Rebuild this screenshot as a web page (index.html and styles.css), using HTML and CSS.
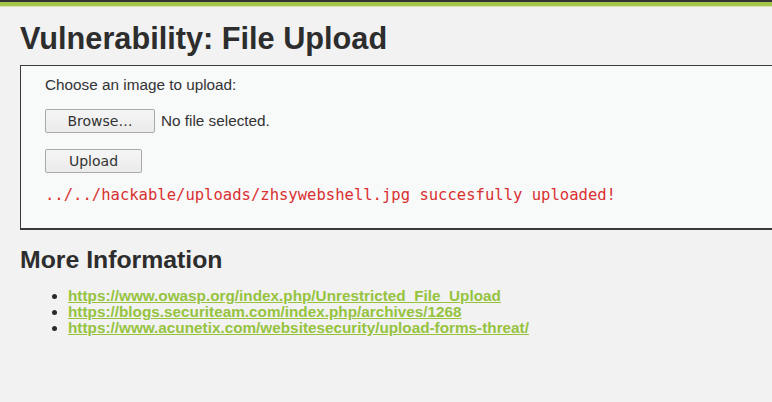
FILE: index.html
```html
<!DOCTYPE html>
<html>
<head>
<meta charset="utf-8">
<link rel="stylesheet" href="styles.css">
</head>
<body>
<div class="topbar"></div>
<div class="main">
  <h1 class="title">Vulnerability: File Upload</h1>
  <div class="code-area">
    <form class="upload-form">
      <p class="label">Choose an image to upload:</p>
      <div class="file-row">
        <span class="btn btn-browse">Browse…</span>
        <span class="file-status">No file selected.</span>
      </div>
      <div class="upload-row">
        <span class="btn btn-upload">Upload</span>
      </div>
    </form>
    <pre class="message">../../hackable/uploads/zhsywebshell.jpg succesfully uploaded!</pre>
  </div>
  <h2 class="subtitle">More Information</h2>
  <ul class="links">
    <li><a href="#">https://www.owasp.org/index.php/Unrestricted_File_Upload</a></li>
    <li><a href="#">https://blogs.securiteam.com/index.php/archives/1268</a></li>
    <li><a href="#">https://www.acunetix.com/websitesecurity/upload-forms-threat/</a></li>
  </ul>
</div>
</body>
</html>
```
FILE: styles.css
```css
html, body {
  margin: 0;
  padding: 0;
}
body {
  background: #f2f2f2;
  font-family: "Liberation Sans", Arial, sans-serif;
  color: #2b2b2b;
  overflow: hidden;
}
.topbar {
  height: 4px;
  border-top: 2px solid #333;
  border-bottom: 1px solid #d6e6ae;
  background: #a4c64a;
}
.main {
  padding: 0 0 0 20px;
}
.title {
  margin: 0;
  padding-top: 14px;
  font-size: 30.7px;
  line-height: 36px;
  font-weight: bold;
  color: #2d2d2d;
}
.code-area {
  margin-top: 8px;
  margin-right: -10px;
  border: 1px solid #3a3a3a;
  border-bottom-width: 2px;
  background: #f8f9f9;
  padding: 8px 24px 24px;
  height: 130px;
}
.upload-form {
  margin: 0;
}
.label {
  margin: 0;
  font-size: 15.3px;
  line-height: 22px;
  color: #333;
}
.file-row {
  display: flex;
  align-items: center;
  margin-top: 13px;
  gap: 6px;
}
.btn {
  display: inline-flex;
  justify-content: center;
  align-items: center;
  box-sizing: border-box;
  border: 1px solid #a9a9a9;
  border-radius: 2px;
  background: linear-gradient(#f5f5f5, #ebebeb);
  font-family: "DejaVu Sans", sans-serif;
  font-size: 14px;
  color: #333;
  height: 24px;
}
.btn-browse {
  width: 110px;
}
.btn-upload {
  width: 97px;
}
.file-status {
  font-size: 15.3px;
  color: #333;
}
.upload-row {
  margin-top: 16px;
}
.message {
  margin: 12px 0 0 0;
  font-family: "DejaVu Sans Mono", monospace;
  font-size: 15.55px;
  line-height: 20px;
  color: #d93030;
}
.subtitle {
  margin: 15px 0 0;
  font-size: 24.8px;
  line-height: 30px;
  font-weight: bold;
  color: #2d2d2d;
}
.links {
  margin: 13px 0 0;
  padding-left: 48px;
  font-size: 15.3px;
  line-height: 16px;
}
.links a {
  color: #96c33e;
  font-weight: bold;
  text-decoration: underline;
}
```
